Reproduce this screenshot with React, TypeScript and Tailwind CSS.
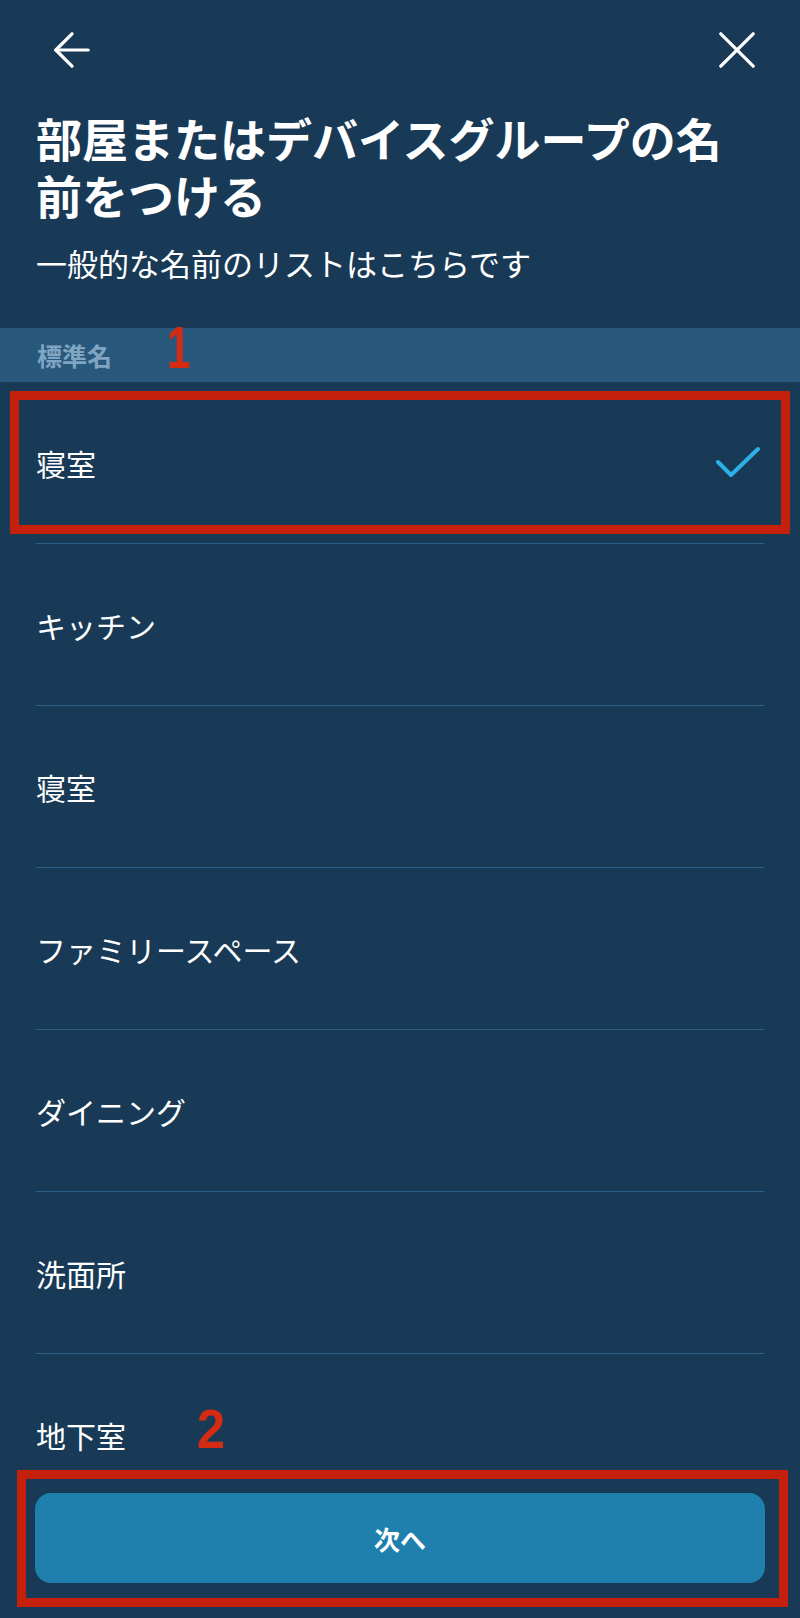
const rooms = ['キッチン', '寝室', 'ファミリースペース', 'ダイニング', '洗面所', '地下室'];

function BackIcon() {
  return (
    <svg width="36" height="36" viewBox="0 0 36 36" fill="none" stroke="white" strokeWidth="3.2" strokeLinecap="round" strokeLinejoin="round">
      <path d="M18 1.8 1.8 18 18 34.2" />
      <path d="M1.8 18h32.4" />
    </svg>
  );
}

function CloseIcon() {
  return (
    <svg width="36" height="36" viewBox="0 0 36 36" fill="none" stroke="white" strokeWidth="3.2" strokeLinecap="round">
      <path d="M1.8 1.8 34.2 34.2" />
      <path d="M34.2 1.8 1.8 34.2" />
    </svg>
  );
}

function CheckIcon() {
  return (
    <svg width="46" height="34" viewBox="0 0 46 34" fill="none" stroke="#2bb0e8" strokeWidth="4" strokeLinecap="round" strokeLinejoin="round">
      <path d="M4 16 17 29 44 3" />
    </svg>
  );
}

function Row({ label, checked }: { label: string; checked?: boolean }) {
  return (
    <>
      <div className="h-[161px] shrink-0 flex items-center justify-between pl-[36px] pr-[40px]">
        <span className="text-[30px] leading-[40px] text-white">{label}</span>
        {checked && <CheckIcon />}
      </div>
      <div className="h-px mx-[36px] shrink-0 bg-[#2d5e86]" />
    </>
  );
}

export default function App() {
  return (
    <div
      className="relative w-[800px] h-[1618px] overflow-hidden bg-[#183a56] flex flex-col"
      style={{ fontFamily: '"Noto Sans CJK JP", "Noto Sans", sans-serif' }}
    >
      <div className="flex justify-between pt-[32px] pl-[54px] pr-[45px] shrink-0">
        <BackIcon />
        <CloseIcon />
      </div>

      <h1 className="mt-[41px] px-[36px] text-[46px] leading-[57px] font-bold text-white shrink-0">
        部屋またはデバイスグループの名前をつける
      </h1>
      <p className="mt-[20px] px-[36px] text-[31px] leading-[40px] text-white shrink-0">
        一般的な名前のリストはこちらです
      </p>

      <div className="mt-[45px] h-[54px] shrink-0 bg-[#28587b] flex items-center px-[37px]">
        <span className="text-[25px] leading-[25px] font-bold text-[#7fa5c2]">標準名</span>
      </div>

      <div className="flex-1 overflow-hidden flex flex-col">
        <Row label="寝室" checked />
        {rooms.map((r, i) => (
          <Row key={i} label={r} />
        ))}
      </div>

      <div className="shrink-0 pt-[24px] pb-[35px] px-[35px]">
        <button className="w-full h-[90px] rounded-2xl bg-[#1f80ae] text-white text-[26px] font-bold">
          次へ
        </button>
      </div>

      {/* annotation overlays */}
      <div className="absolute left-[10px] top-[391px] w-[780px] h-[143px] border-[9px] border-[#c4200c]" />
      <div className="absolute left-[17px] top-[1470px] w-[771px] h-[137px] border-[9px] border-[#c4200c]" />
      <span
        className="absolute left-[167px] top-[318px] text-[60px] leading-none font-bold text-[#d42b12] origin-left scale-x-[0.7]"
        style={{ fontFamily: '"Liberation Sans", sans-serif' }}
      >
        1
      </span>
      <span
        className="absolute left-[197px] top-[1401px] text-[56px] leading-none font-bold text-[#d42b12] origin-left scale-x-[0.9]"
        style={{ fontFamily: '"Liberation Sans", sans-serif' }}
      >
        2
      </span>
    </div>
  );
}
